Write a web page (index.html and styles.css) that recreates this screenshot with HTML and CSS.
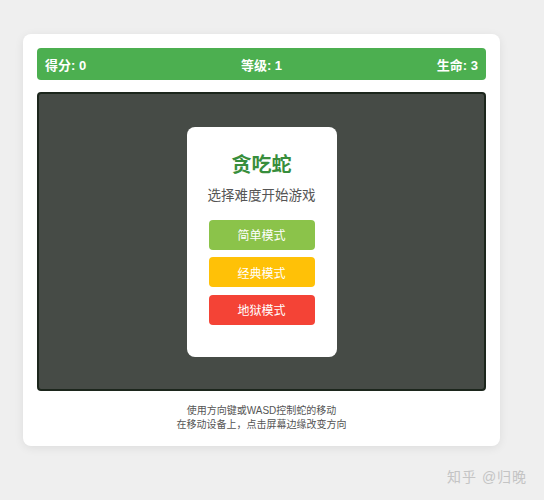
FILE: index.html
```html
<!DOCTYPE html>
<html lang="zh">
<head>
<meta charset="utf-8">
<link rel="stylesheet" href="styles.css">
</head>
<body>
<div class="card">
  <div class="stats">
    <span>得分: 0</span>
    <span>等级: 1</span>
    <span>生命: 3</span>
  </div>
  <div class="board">
    <div class="menu">
      <h1 class="title">贪吃蛇</h1>
      <p class="subtitle">选择难度开始游戏</p>
      <button class="btn easy">简单模式</button>
      <button class="btn classic">经典模式</button>
      <button class="btn hell">地狱模式</button>
    </div>
  </div>
  <div class="help">
    <p>使用方向键或WASD控制蛇的移动</p>
    <p>在移动设备上，点击屏幕边缘改变方向</p>
  </div>
</div>
<div class="watermark">知乎 @归晚</div>
</body>
</html>
```
FILE: styles.css
```css
html, body {
  margin: 0;
  padding: 0;
}
body {
  background: #efefef;
  width: 544px;
  height: 500px;
  font-family: "Liberation Sans", "Noto Sans CJK SC", sans-serif;
  position: relative;
  overflow: hidden;
}
.card {
  margin: 34px 0 0 23px;
  width: 477px;
  box-sizing: border-box;
  background: #fff;
  border-radius: 8px;
  box-shadow: 0 2px 10px rgba(0,0,0,0.08);
  padding: 14px 14px 14px 14px;
}
.stats {
  display: flex;
  justify-content: space-between;
  align-items: center;
  background: #4caf50;
  color: #fff;
  font-weight: bold;
  font-size: 13px;
  height: 32px;
  padding: 0 8px;
  border-radius: 4px;
}
.board {
  margin-top: 12px;
  height: 299px;
  box-sizing: border-box;
  background: #464b46;
  border: 2px solid #1c261c;
  border-radius: 4px;
  display: flex;
  align-items: center;
  justify-content: center;
}
.menu {
  width: 150px;
  height: 230px;
  box-sizing: border-box;
  background: #fff;
  border-radius: 8px;
  display: flex;
  flex-direction: column;
  align-items: center;
  padding-top: 24px;
}
.title {
  margin: 0;
  font-size: 20px;
  font-weight: bold;
  color: #388e3c;
  line-height: 28px;
}
.subtitle {
  margin: 7px 0 14px;
  font-size: 13.5px;
  color: #555;
  line-height: 20px;
}
.btn {
  width: 106px;
  height: 30px;
  border: none;
  border-radius: 4px;
  color: #fff;
  font-family: inherit;
  font-size: 12px;
  margin-bottom: 7.5px;
  padding: 0;
}
.easy { background: #8bc34a; }
.classic { background: #ffc107; }
.hell { background: #f44336; }
.help {
  margin-top: 13px;
  text-align: center;
  font-size: 10px;
  color: #555;
  line-height: 14px;
}
.help p {
  margin: 0;
}
.watermark {
  position: absolute;
  left: 447px;
  top: 466px;
  font-size: 14px;
  color: #c4c4c4;
  letter-spacing: 1px;
}
```
